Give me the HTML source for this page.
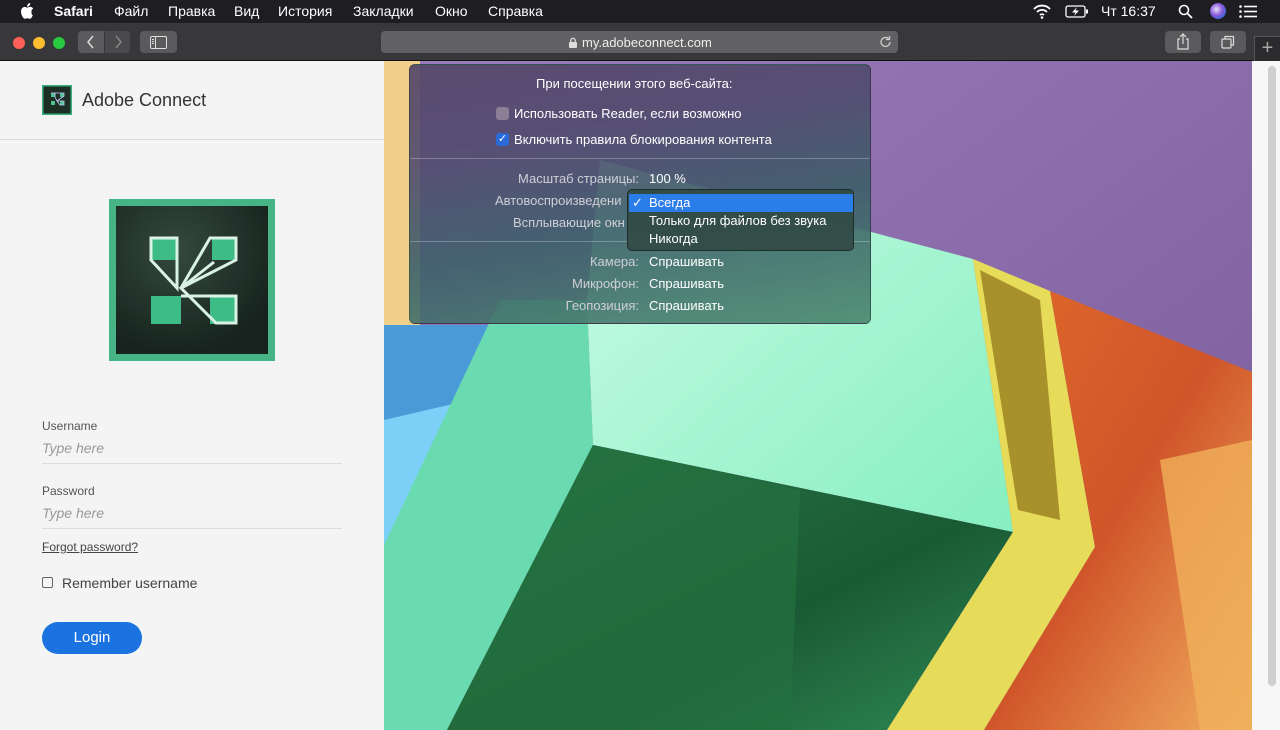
<!DOCTYPE html>
<html><head><meta charset="utf-8"><style>
*{margin:0;padding:0;box-sizing:border-box}
body{width:1280px;height:730px;overflow:hidden;position:relative;background:#f4f4f4;font-family:"Liberation Sans","DejaVu Sans",sans-serif}
.abs{position:absolute}
#menubar{left:0;top:0;width:1280px;height:23px;background:#1d1d22;color:#fff;font-size:14px}
#menubar span{position:absolute;top:3px}
#toolbar{left:0;top:23px;width:1280px;height:38px;background:#38383a;border-bottom:1px solid #111}
.btn{position:absolute;background:#5a5a5d;border-radius:4px}
#left{left:0;top:61px;width:384px;height:669px;background:#f4f4f4;color:#444}
.lbl{font-size:12px;color:#555;position:absolute;left:42px}
.ph{font-size:14px;color:#999;font-style:italic;position:absolute;left:42px}
.line{position:absolute;left:42px;width:300px;height:1px;background:#ddd}
#pop{left:409px;top:64px;width:462px;height:260px;border-radius:6px;background:linear-gradient(170deg,rgba(85,70,105,.92) 0%,rgba(80,75,110,.9) 30%,rgba(60,95,105,.9) 60%,rgba(75,135,110,.9) 100%);border:1px solid rgba(0,0,0,.3);color:#fff;font-size:13px;overflow:hidden}
#pop .t{position:absolute;white-space:nowrap}
.g{color:#cfcfd6}
</style></head><body>
<div id="menubar" class="abs">
<svg class="abs" style="left:20px;top:3px" width="14" height="16" viewBox="0 0 14 16"><path fill="#fff" d="M11.5 8.5c0-2 1.6-2.9 1.7-3-1-1.4-2.4-1.6-2.9-1.6-1.2-.1-2.4.7-3 .7s-1.6-.7-2.6-.7C3.300 4 1 5.200 1 8.500c0 3.200 2.300 7.300 3.800 7.300.8 0 1.300-.6 2.500-.6s1.500.6 2.500.6c1.300 0 2.400-2.100 3-3.700-1.600-.6-1.300-2.600-1.300-3.600zM9.400 2.600C10 1.900 10.300 1 10.200 0 9.400 0 8.400.6 7.900 1.300 7.400 1.900 7 2.800 7.100 3.700c.9.1 1.800-.4 2.300-1.100z"/></svg>
<span style="left:54px;font-weight:bold">Safari</span><span style="left:114px">Файл</span><span style="left:168px">Правка</span><span style="left:234px">Вид</span><span style="left:278px">История</span><span style="left:353px">Закладки</span><span style="left:435px">Окно</span><span style="left:488px">Справка</span>
<svg class="abs" style="left:1032px;top:4px" width="20" height="15" viewBox="0 0 20 15"><path d="M2 5a11 11 0 0 1 16 0M5 8a7 7 0 0 1 10 0M8 11a3 3 0 0 1 4 0" stroke="#fff" stroke-width="1.8" fill="none"/><circle cx="10" cy="13.5" r="1.3" fill="#fff"/></svg>
<svg class="abs" style="left:1065px;top:5px" width="24" height="13" viewBox="0 0 24 13"><rect x="1" y="1" width="19" height="11" rx="2" stroke="#fff" fill="none" stroke-width="1.3"/><rect x="21" y="4.500" width="2" height="4" fill="#fff"/><path d="M12 2 7 7.500h3.500L9 11l5-5.500h-3.500z" fill="#fff"/></svg>
<span style="left:1101px">Чт 16:37</span>
<svg class="abs" style="left:1178px;top:4px" width="15" height="15" viewBox="0 0 15 15"><circle cx="6" cy="6" r="4.500" stroke="#fff" stroke-width="1.600" fill="none"/><path d="M9.500 9.500 14 14" stroke="#fff" stroke-width="1.800"/></svg>
<div class="abs" style="left:1210px;top:3px;width:16px;height:16px;border-radius:50%;background:radial-gradient(circle at 40% 40%,#e8e0ff,#8a5ad8 45%,#2a6ad8 80%)"></div>
<svg class="abs" style="left:1239px;top:5px" width="18" height="13" viewBox="0 0 18 13"><g fill="#fff"><circle cx="1.500" cy="1.500" r="1.300"/><circle cx="1.500" cy="6.500" r="1.300"/><circle cx="1.500" cy="11.500" r="1.300"/><rect x="5" y="0.700" width="13" height="1.600"/><rect x="5" y="5.700" width="13" height="1.600"/><rect x="5" y="10.700" width="13" height="1.600"/></g></svg>
</div>
<div id="toolbar" class="abs">
<div class="abs" style="left:13px;top:14px;width:12px;height:12px;border-radius:50%;background:#fe5f57"></div>
<div class="abs" style="left:33px;top:14px;width:12px;height:12px;border-radius:50%;background:#febc2e"></div>
<div class="abs" style="left:53px;top:14px;width:12px;height:12px;border-radius:50%;background:#28c840"></div>
<div class="btn" style="left:78px;top:8px;width:26px;height:22px;border-radius:4px 0 0 4px"></div>
<div class="btn" style="left:105px;top:8px;width:25px;height:22px;border-radius:0 4px 4px 0;background:#4a4a4d"></div>
<svg class="abs" style="left:86px;top:12px" width="10" height="14"><path d="M7 1 2 7l5 6" stroke="#ddd" stroke-width="1.500" fill="none"/></svg>
<svg class="abs" style="left:113px;top:12px" width="10" height="14"><path d="M3 1l5 6-5 6" stroke="#888" stroke-width="1.500" fill="none"/></svg>
<div class="btn" style="left:140px;top:8px;width:37px;height:22px"></div>
<svg class="abs" style="left:150px;top:13px" width="17" height="13"><rect x="0.500" y="0.500" width="16" height="12" rx="1.500" stroke="#ddd" fill="none"/><path d="M5.500 1v11" stroke="#ddd"/><path d="M2 3.500h2M2 5.500h2M2 7.500h2" stroke="#ddd"/></svg>
<div class="btn" style="left:381px;top:8px;width:517px;height:22px;background:#616164"></div>
<svg class="abs" style="left:568px;top:14px" width="10" height="11"><rect x="1" y="5" width="8" height="6" rx="1" fill="#ddd"/><path d="M2.800 5V3.500a2.200 2.200 0 0 1 4.400 0V5" stroke="#ddd" stroke-width="1.300" fill="none"/></svg>
<div class="abs" style="left:582px;top:12px;color:#eee;font-size:13px">my.adobeconnect.com</div>
<svg class="abs" style="left:879px;top:12px" width="14" height="14"><path d="M11 7a4.500 4.500 0 1 1-1.300-3.200" stroke="#ccc" stroke-width="1.300" fill="none"/><path d="M10.500 1v3.500H7" stroke="#ccc" stroke-width="1.300" fill="none"/></svg>
<div class="btn" style="left:1165px;top:8px;width:36px;height:22px"></div>
<svg class="abs" style="left:1176px;top:10px" width="14" height="17"><path d="M4 6H2v10h10V6h-2M7 11V1M4 4l3-3 3 3" stroke="#ddd" stroke-width="1.200" fill="none"/></svg>
<div class="btn" style="left:1210px;top:8px;width:36px;height:22px"></div>
<svg class="abs" style="left:1221px;top:12px" width="14" height="14"><rect x="1" y="4" width="9" height="9" rx="1" stroke="#ddd" fill="none" stroke-width="1.200"/><path d="M4 4V1.500h8.500V10H10" stroke="#ddd" fill="none" stroke-width="1.200"/></svg>
<div class="abs" style="left:1254px;top:13px;width:26px;height:25px;background:#2b2b2d;border-left:1px solid #555;border-top:1px solid #555;color:#aaa;font-size:20px;text-align:center;line-height:22px">+</div>
</div>

<!-- right art -->
<svg class="abs" style="left:384px;top:61px" width="896" height="669" viewBox="384 61 896 669">
<defs>
<linearGradient id="pu" x1="0" y1="0" x2="1" y2="1"><stop offset="0" stop-color="#9a7dba"/><stop offset="1" stop-color="#7a5a9a"/></linearGradient>
<linearGradient id="mint" x1="0" y1="0" x2="1" y2="1"><stop offset="0" stop-color="#c8fbe4"/><stop offset="1" stop-color="#86efc0"/></linearGradient>
<linearGradient id="dg" x1="0" y1="0" x2="1" y2="1"><stop offset="0" stop-color="#2a7a48"/><stop offset="0.6" stop-color="#1a5a34"/><stop offset="1" stop-color="#2f8a55"/></linearGradient>
<linearGradient id="or" x1="0" y1="0" x2="1" y2="1"><stop offset="0" stop-color="#e06a2a"/><stop offset="0.5" stop-color="#d0552a"/><stop offset="1" stop-color="#f2b060"/></linearGradient>
</defs>
<rect x="384" y="61" width="896" height="669" fill="url(#pu)"/>
<polygon points="384,61 420,61 420,325 384,330" fill="#f0d08a"/>
<polygon points="384,325 500,325 384,545" fill="#4a9ad8"/>
<polygon points="384,420 470,400 384,560" fill="#7cd0f8"/>
<polygon points="500,300 587,300 593,445 447,730 384,730 384,545" fill="#6adbb0"/>
<polygon points="587,300 600,160 973,259 1013,532 593,445" fill="url(#mint)"/>
<polygon points="593,445 1013,532 887,730 447,730" fill="url(#dg)"/>
<polygon points="593,445 800,490 790,730 447,730" fill="#23703f" opacity=".7"/>
<polygon points="973,259 1050,291 1095,547 984,730 887,730 1013,532" fill="#e6dc5a"/>
<polygon points="980,270 1040,300 1060,520 1018,510" fill="#a8902a"/>
<polygon points="1050,291 1252,372 1252,730 984,730 1095,547" fill="url(#or)"/>
<polygon points="1160,460 1252,440 1252,730 1200,730" fill="#f0b05a" opacity=".8"/>
<rect x="1252" y="61" width="28" height="669" fill="#f7f7f7"/>
<rect x="1268" y="66" width="8" height="620" rx="4" fill="#cfcfcf"/>
</svg>

<div id="left" class="abs">
<svg class="abs" style="left:42px;top:24px" width="30" height="30" viewBox="0 0 30 30"><rect width="30" height="30" fill="#3aae7e"/><rect x="1.500" y="1.500" width="27" height="27" fill="#1d2e27"/><rect x="9" y="8" width="4" height="4" fill="#4ec08f"/><rect x="18" y="8" width="4" height="4" fill="#4ec08f"/><rect x="9" y="16" width="4" height="4" fill="#4ec08f"/><rect x="18" y="16" width="4" height="4" fill="#4ec08f"/><path d="M9 8h4v4l2 4 7-5V8h-4zM15 16l3 4h4v-4z" stroke="#ccf" stroke-width=".8" fill="none"/></svg>
<div class="abs" style="left:82px;top:29px;font-size:18px;color:#333">Adobe Connect</div>
<div class="abs" style="left:0;top:78px;width:384px;height:1px;background:#ddd"></div>
<svg class="abs" style="left:109px;top:138px" width="167" height="162" viewBox="0 0 167 162"><rect width="166" height="162" fill="#46b485"/><rect x="7" y="7" width="152" height="148" fill="#1e2f28"/><defs><radialGradient id="rg" cx=".4" cy=".3" r=".7"><stop offset="0" stop-color="#34493f"/><stop offset="1" stop-color="#17231e"/></radialGradient></defs><rect x="7" y="7" width="152" height="148" fill="url(#rg)"/>
<rect x="42" y="39" width="25" height="22" fill="#3ebc86"/><rect x="103" y="39" width="25" height="22" fill="#3ebc86"/><rect x="42" y="97" width="30" height="28" fill="#3ebc86"/><rect x="101" y="97" width="26" height="28" fill="#3ebc86"/>
<path d="M42 39h26v50L42 61zM72 89 101 39h26v22L72 89l35 35h20V97h-55" stroke="#d9f2e6" stroke-width="3" fill="none" stroke-linejoin="miter"/><path d="M72 89l33-26" stroke="#d9f2e6" stroke-width="3"/></svg>
<div class="lbl" style="top:358px">Username</div>
<div class="ph" style="top:379px">Type here</div>
<div class="line" style="top:402px"></div>
<div class="lbl" style="top:423px">Password</div>
<div class="ph" style="top:444px">Type here</div>
<div class="line" style="top:467px"></div>
<div class="abs" style="left:42px;top:479px;font-size:12px;color:#444;text-decoration:underline">Forgot password?</div>
<div class="abs" style="left:42px;top:516px;width:11px;height:11px;border:1.5px solid #666;border-radius:2px"></div>
<div class="abs" style="left:62px;top:514px;font-size:14px;color:#444">Remember username</div>
<div class="abs" style="left:42px;top:561px;width:100px;height:32px;border-radius:16px;background:#1a73e0;color:#fff;font-size:15px;text-align:center;line-height:32px">Login</div>
</div>

<div id="pop" class="abs">
<div class="t" style="left:126px;top:11px">При посещении этого веб-сайта:</div>
<div class="abs" style="left:86px;top:42px;width:13px;height:13px;border-radius:3px;background:#8a7d95"></div>
<div class="t" style="left:104px;top:41px">Использовать Reader, если возможно</div>
<div class="abs" style="left:86px;top:68px;width:13px;height:13px;border-radius:3px;background:#2a6ad8;color:#fff;font-size:11px;line-height:13px;text-align:center">✓</div>
<div class="t" style="left:104px;top:67px">Включить правила блокирования контента</div>
<div class="abs" style="left:0;top:93px;width:462px;height:1px;background:rgba(255,255,255,.25)"></div>
<div class="t g" style="right:231px;top:106px">Масштаб страницы:</div>
<div class="t" style="left:239px;top:106px">100 %</div>
<div class="t g" style="left:85px;top:128px">Автовоспроизведени</div>
<div class="t g" style="left:103px;top:150px">Всплывающие окн</div>
<div class="abs" style="left:0;top:176px;width:462px;height:1px;background:rgba(255,255,255,.25)"></div>
<div class="t g" style="right:231px;top:189px">Камера:</div><div class="t" style="left:239px;top:189px">Спрашивать</div>
<div class="t g" style="right:231px;top:211px">Микрофон:</div><div class="t" style="left:239px;top:211px">Спрашивать</div>
<div class="t g" style="right:231px;top:233px">Геопозиция:</div><div class="t" style="left:239px;top:233px">Спрашивать</div>
<div class="abs" style="left:217px;top:124px;width:227px;height:62px;border-radius:5px;background:rgba(50,75,70,.95);border:1px solid rgba(0,0,0,.4)">
<div class="abs" style="left:1px;top:4px;width:224px;height:18px;background:#2b7de9"></div>
<div class="t" style="left:4px;top:5px">✓</div>
<div class="t" style="left:21px;top:5px">Всегда</div>
<div class="t" style="left:21px;top:23px">Только для файлов без звука</div>
<div class="t" style="left:21px;top:41px">Никогда</div>
</div>
</div>
</body></html>
